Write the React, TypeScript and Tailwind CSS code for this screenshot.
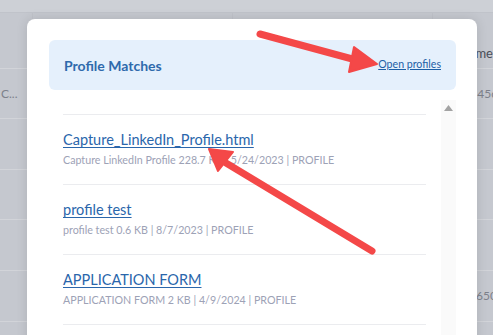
import React from 'react';

interface ProfileFile {
  name: string;
  label: string;
  size: string;
  date: string;
}

const files: ProfileFile[] = [
  { name: 'Capture_LinkedIn_Profile.html', label: 'Capture LinkedIn Profile', size: '228.7 KB', date: '5/24/2023' },
  { name: 'profile test', label: 'profile test', size: '0.6 KB', date: '8/7/2023' },
  { name: 'APPLICATION FORM', label: 'APPLICATION FORM', size: '2 KB', date: '4/9/2024' },
];

// greyed-out page behind the modal
const Backdrop: React.FC = () => (
  <div className="flex flex-col w-full h-full bg-[#c5c8cf] text-[#7d818b] text-[12px]">
    <div className="h-[13px] bg-[#cdd0d6] border-b border-[#c0c3ca]"></div>
    <div className="h-[56px] flex border-b border-[#d2d4d9]">
      <div className="w-[33px] border-r border-[#bfc2c9]"></div>
      <div className="w-[200px] border-r border-[#bfc2c9]"></div>
      <div className="w-[201px] border-r border-[#bfc2c9]"></div>
      <div className="flex-1 pl-[42px] pt-[31px] text-[13px] text-[#4b4f58] whitespace-nowrap">me</div>
    </div>
    <div className="h-[50px] flex items-center justify-between border-b border-[#d2d4d9] whitespace-nowrap">
      <span className="pl-[1px]">C...</span>
      <span className="mr-[-4px]">45c</span>
    </div>
    <div className="h-[51px] border-b border-[#d2d4d9]"></div>
    <div className="h-[50px] border-b border-[#d2d4d9]"></div>
    <div className="h-[51px] border-b border-[#d2d4d9]"></div>
    <div className="h-[51px] border-b border-[#d2d4d9] flex items-center justify-end whitespace-nowrap">
      <span className="mr-[-4px]">650</span>
    </div>
    <div className="flex-1"></div>
  </div>
);

const Arrows: React.FC = () => (
  <svg className="absolute inset-0 pointer-events-none" width="493" height="335" viewBox="0 0 493 335">
    <g fill="#f44848" stroke="#f44848" strokeLinecap="round" strokeLinejoin="round">
      <line x1="260" y1="34" x2="356" y2="60" strokeWidth="7" />
      <polygon points="377,64 354,47 349,72" strokeWidth="2" />
      <line x1="372" y1="251" x2="226" y2="163" strokeWidth="7" />
      <polygon points="209,149 233,152 218,171" strokeWidth="2" />
    </g>
  </svg>
);

export default function App() {
  return (
    <div className="relative w-[493px] h-[335px] overflow-hidden" style={{ fontFamily: 'Lato, "Open Sans", sans-serif' }}>
      <Backdrop />

      {/* Modal */}
      <div className="absolute left-[27px] top-[19px] w-[450px] h-[340px] bg-white rounded-[8px] shadow-[0_0_12px_rgba(0,0,0,0.12)] pt-[21px] pl-[22px] pr-[21px]">
        <div className="h-[50px] bg-[#e5f0fc] rounded-[6px] flex items-center justify-between pl-[15px] pr-[15px]">
          <h3 className="text-[14px] font-bold text-[#2f6aac]">Profile Matches</h3>
          <a className="text-[10.6px] text-[#1d5fa6] underline">Open profiles</a>
        </div>

        <div className="flex mt-[10px]">
          <div className="w-[392px] pl-[14px] pr-[15px] pt-[14px]">
            {files.map((f) => (
              <div key={f.name} className="border-t border-[#ebecef] pt-[15px] pb-[14px] h-[70px]">
                <div className="text-[14.5px] leading-[20px] text-[#2a66ab] underline underline-offset-[2px]">{f.name}</div>
                <div className="text-[10.7px] leading-[16px] mt-[2px] text-[#9da2b6]">
                  {f.label} {f.size} | {f.date} | PROFILE
                </div>
              </div>
            ))}
            <div className="border-t border-[#ebecef]"></div>
          </div>
          <div className="w-[15px] h-[240px] bg-[#fafafa] flex justify-center pt-[5px]">
            <svg width="9" height="7" viewBox="0 0 9 7">
              <polygon points="4.5,0 9,6 0,6" fill="#a3a3a3" />
            </svg>
          </div>
        </div>
      </div>

      <Arrows />
    </div>
  );
}
